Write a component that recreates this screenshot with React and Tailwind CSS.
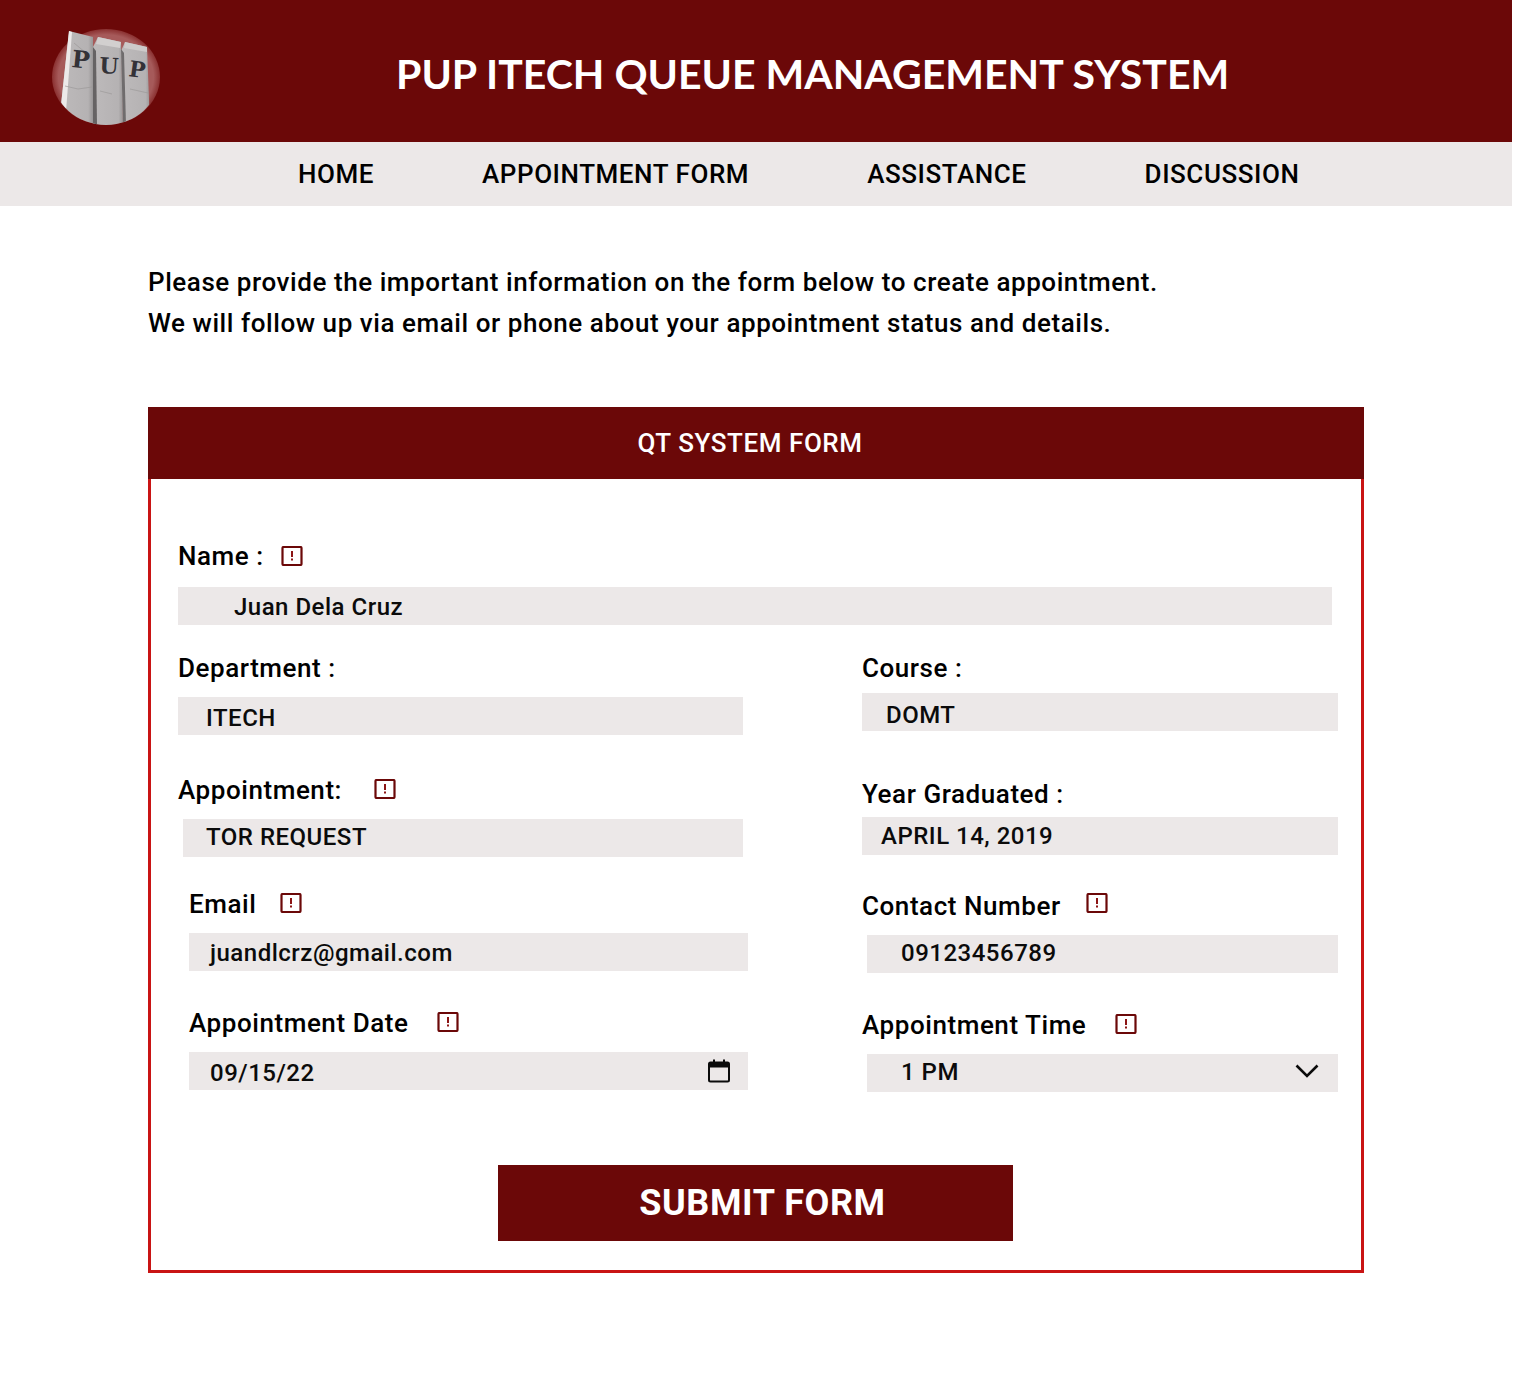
const roboto = { fontFamily: "Roboto, sans-serif" };
const slab = "DejaVu Serif, serif";

function Logo() {
  return (
    <svg width="108" height="96" viewBox="0 0 108 96" className="mt-[6px] shrink-0">
      <defs>
        <clipPath id="logoClip">
          <ellipse cx="54" cy="48" rx="53" ry="48" />
          <rect x="0" y="0" width="108" height="48" />
        </clipPath>
        <radialGradient id="disc" cx="0.5" cy="0.5" r="0.5">
          <stop offset="0.88" stopColor="#a65a5a" />
          <stop offset="1" stopColor="#8a3030" />
        </radialGradient>
        <linearGradient id="pillar" x1="0" y1="0" x2="1" y2="0">
          <stop offset="0" stopColor="#bdbabb" />
          <stop offset="0.85" stopColor="#b5b2b3" />
          <stop offset="1" stopColor="#989596" />
        </linearGradient>
      </defs>
      <ellipse cx="54" cy="48" rx="54" ry="48" fill="url(#disc)" />
      <g clipPath="url(#logoClip)">
        <path d="M17 2 L41 8 L41 96 L9 96 L9 76 Z" fill="url(#pillar)" />
        <path d="M17 2 L9 76 L9 96 L13 96 L20 3 Z" fill="#ece9e9" />
        <path d="M41 18 L46 8 L69 13 L71 96 L41 96 Z" fill="url(#pillar)" />
        <path d="M73 13 L95 18 L98 96 L71 96 L69 22 Z" fill="url(#pillar)" />
        <path d="M41 18 L41 96 L45 96 L44 22 Z" fill="#666364" />
        <path d="M69 20 L71 96 L74 96 L72 24 Z" fill="#6f6c6d" />
        <path d="M46 8 L69 13 L68 19 L44 15 Z" fill="#d2cfcf" />
        <path d="M73 13 L95 18 L95 23 L72 19 Z" fill="#cdcaca" />
        <path d="M13 57 L26 60 L40 58 M48 62 L60 65 M78 60 L96 64 M22 14 L34 24" stroke="#9c999a" strokeWidth="0.7" fill="none" />
      </g>
      <text x="19" y="38" fontFamily={slab} fontWeight="700" fontSize="24" fill="#333238" transform="rotate(6 19 38)">P</text>
      <text x="47" y="44" fontFamily={slab} fontWeight="700" fontSize="22" fill="#333238" transform="rotate(3 47 44)">U</text>
      <text x="76" y="47" fontFamily={slab} fontWeight="700" fontSize="22" fill="#333238" transform="rotate(8 76 47)">P</text>
    </svg>
  );
}

function Req({ className }) {
  return (
    <svg width="22" height="20" viewBox="0 0 22 20" className={className}>
      <rect x="1.5" y="1" width="19" height="18" rx="1" fill="none" stroke="#6b0808" strokeWidth="2.2" />
      <rect x="10" y="5" width="2" height="6" fill="#8c1414" />
      <rect x="10" y="12.5" width="2" height="2" fill="#8c1414" />
    </svg>
  );
}

function Label({ text, className, req }) {
  return (
    <div className={"flex h-[34px] items-center whitespace-nowrap text-[26px] font-medium tracking-[0.56px] text-black " + className}>
      <span>{text}</span>
      {req}
    </div>
  );
}

function Box({ className, textClass, text, children }) {
  return (
    <div className={"flex h-[38px] items-center justify-between bg-[#ece8e8] text-[24px] font-medium tracking-[0.5px] text-[#0b0b0b] " + className}>
      <span className={textClass}>{text}</span>
      {children}
    </div>
  );
}

export default function App() {
  return (
    <div className="min-h-[1373px] w-[1512px] bg-white" style={roboto}>
      <header className="flex h-[142px] items-center bg-[#6b0808] pl-[52px] pt-[6px]">
        <Logo />
        <h1 className="ml-[236px] whitespace-nowrap text-[41px] font-bold text-white" style={{ fontFamily: "Lato, sans-serif" }}>
          PUP ITECH QUEUE MANAGEMENT SYSTEM
        </h1>
      </header>
      <nav className="flex h-[64px] items-center whitespace-nowrap bg-[#ece8e8] pl-[298px] text-[26px] font-medium tracking-[0.56px] text-black">
        <span>HOME</span>
        <span className="ml-[108px]">APPOINTMENT FORM</span>
        <span className="ml-[118px]">ASSISTANCE</span>
        <span className="ml-[118px]">DISCUSSION</span>
      </nav>
      <main className="pl-[148px] pt-[56px]">
        <p className="text-[26px] font-medium leading-[41px] tracking-[0.56px] text-black">
          Please provide the important information on the form below to create appointment.
          <br />
          We will follow up via email or phone about your appointment status and details.
        </p>
        <section className="mt-[63px] w-[1216px] border-[3px] border-t-0 border-[#c91414]">
          <div className="-mx-[3px] flex h-[72px] items-center justify-center bg-[#6b0808] pr-[12px] text-[26px] font-medium tracking-[0.56px] text-white">
            QT SYSTEM FORM
          </div>
          <div className="pl-[27px] pt-[60px]">
            <Label text="Name :" className="mb-[14px]" req={<Req className="ml-[17px]" />} />
            <Box className="w-[1154px] pl-[56px]" textClass="mt-[2px]" text="Juan Dela Cruz" />
            <div className="mt-[26px] flex">
              <div className="w-[684px] shrink-0">
                <Label text="Department :" className="mb-[12px]" />
                <Box className="w-[565px] pl-[28px]" textClass="mt-[4px]" text="ITECH" />
                <Label text="Appointment:" className="mb-[12px] mt-[38px]" req={<Req className="-mt-[2px] ml-[32px]" />} />
                <Box className="ml-[5px] w-[560px] pl-[23px]" textClass="mb-[2px]" text="TOR REQUEST" />
                <Label text="Email" className="mb-[12px] ml-[11px] mt-[30px]" req={<Req className="-mt-[2px] ml-[24px]" />} />
                <Box className="ml-[11px] w-[559px] pl-[21px]" textClass="mt-[2px]" text="juandlcrz@gmail.com" />
                <Label text="Appointment Date" className="mb-[12px] ml-[11px] mt-[35px]" req={<Req className="-mt-[2px] ml-[29px]" />} />
                <Box className="ml-[11px] w-[559px] pl-[21px] pr-[18px]" textClass="mt-[3px]" text="09/15/22">
                  <svg width="22" height="24" viewBox="0 0 22 24">
                    <rect x="1" y="3.5" width="20" height="19" rx="1.5" fill="none" stroke="#0b0b0b" strokeWidth="2" />
                    <rect x="1" y="3.5" width="20" height="5" fill="#0b0b0b" />
                    <rect x="5" y="0.5" width="2" height="4" fill="#0b0b0b" />
                    <rect x="15" y="0.5" width="2" height="4" fill="#0b0b0b" />
                  </svg>
                </Box>
              </div>
              <div className="w-[475.5px] shrink-0">
                <Label text="Course :" className="mb-[8px]" />
                <Box className="pl-[24px]" textClass="mt-[5px]" text="DOMT" />
                <Label text="Year Graduated :" className="mb-[6px] mt-[46px]" />
                <Box className="pl-[19px]" text="APRIL 14, 2019" />
                <Label text="Contact Number" className="mb-[12px] mt-[34px]" req={<Req className="-mt-[6px] ml-[25px]" />} />
                <Box className="ml-[5px] w-[470.5px] pl-[34px]" textClass="mb-[2px]" text="09123456789" />
                <Label text="Appointment Time" className="mb-[12px] mt-[35px]" req={<Req className="-mt-[2px] ml-[29px]" />} />
                <Box className="ml-[5px] w-[470.5px] pl-[34px] pr-[19px]" textClass="mb-[2px]" text="1 PM">
                  <svg width="24" height="14" viewBox="0 0 24 14" fill="none" className="-mt-[5px]">
                    <path d="M1.5 1.5 L12 12 L22.5 1.5" stroke="#0b0b0b" strokeWidth="2.6" />
                  </svg>
                </Box>
              </div>
            </div>
            <div className="mt-[73px] pb-[29px] pl-[320px]">
              <button className="flex h-[76px] w-[515px] items-center justify-center bg-[#6b0808] pl-[14px] text-[36px] font-bold tracking-[0.6px] text-white">
                SUBMIT FORM
              </button>
            </div>
          </div>
        </section>
      </main>
    </div>
  );
}
